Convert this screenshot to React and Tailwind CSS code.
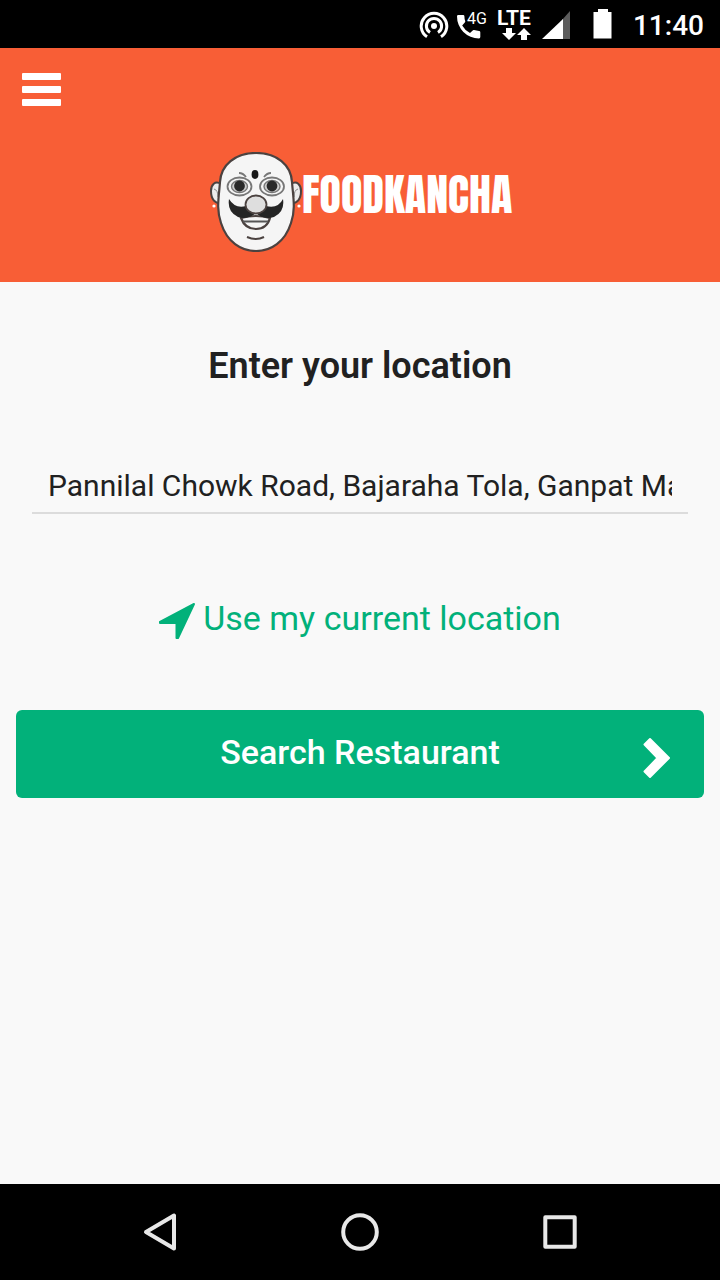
import React, { useState } from "react";

const StatusBar = () => (
  <div className="h-12 bg-black text-white flex items-center justify-end pr-4">
    {/* hotspot */}
    <svg className="w-8 h-8 mr-2" viewBox="0 0 32 32" fill="none" stroke="currentColor" strokeWidth={3}>
      <circle cx="17" cy="18" r="3" fill="currentColor" stroke="none" />
      <path d="M13 24.5 A7.6 7.6 0 1 1 21 24.5" />
      <path d="M10 28.8 A12.8 12.8 0 1 1 24 28.8" />
    </svg>
    {/* 4G call */}
    <svg className="w-8 h-8 mr-2 overflow-visible" viewBox="0 0 32 32" fill="currentColor">
      <path d="M1.3 7 h4.800 a1.3 1.3 0 0 1 1.3 1.3 q0 2.600 .8 4.800 a1.3 1.3 0 0 1 -.4 1.4 l-2.600 2.900 a19 19 0 0 0 7.800 7.600 l2.700 -2.600 a1.3 1.3 0 0 1 1.4 -.3 q2.400 .8 5 .8 a1.3 1.3 0 0 1 1.2 1.3 v4.900 a1.3 1.3 0 0 1 -1.3 1.3 A22 22 0 0 1 0 8.3 A1.3 1.3 0 0 1 1.3 7z" />
      <text x="10" y="16" fontSize="16" fontFamily="Roboto, sans-serif">4G</text>
    </svg>
    {/* LTE data */}
    <svg className="w-9 h-8 mr-2 overflow-visible" viewBox="0 0 36 32" fill="currentColor">
      <text x="0" y="17" fontSize="21" fontWeight="700" fontFamily="Roboto, sans-serif">LTE</text>
      <path d="M9 20h6v5h4l-7 7-7-7h4z" />
      <path d="M24 32h6v-5h4l-7-7-7 7h4z" />
    </svg>
    {/* signal */}
    <svg className="w-8 h-8 mr-5" viewBox="0 0 32 32">
      <path d="M21 12 L29 3 V31 H21z" fill="#5c5c5c" />
      <path d="M1 31 L22 11 V31z" fill="white" />
    </svg>
    {/* battery */}
    <svg className="w-5 h-8 mr-5" viewBox="0 0 20 32" fill="currentColor">
      <path d="M5 1h10v3h3.5v26.5h-18V4H5z" />
    </svg>
    <span className="pt-1 text-[28px] leading-8 font-medium">11:40</span>
  </div>
);

const Face = () => (
  <svg className="w-[92px] h-[100px] shrink-0" viewBox="0 0 92 100" fill="none" stroke="#4b4240">
    {/* ears */}
    <path d="M11 32 C5 28 1 33 1 39 C1 47 5 52 11 51z" fill="#ececec" strokeWidth={2} />
    <path d="M81 32 C87 28 91 33 91 39 C91 47 87 52 81 51z" fill="#ececec" strokeWidth={2} />
    <path d="M4 37 q4 1 4 8 M88 37 q-4 1 -4 8" stroke="#888" strokeWidth={1} />
    <circle cx="4" cy="54" r="1.6" fill="white" stroke="none" />
    <circle cx="89" cy="54" r="1.6" fill="white" stroke="none" />
    {/* head */}
    <path
      d="M46 1 C67 1 81 13 82 30 C83 44 86 57 81 71 C75 90 61 99 46 99 C31 99 17 90 11 71 C6 57 9 44 10 30 C11 13 25 1 46 1z"
      fill="#f5f5f5"
      strokeWidth={2.2}
    />
    {/* tilak and brows */}
    <ellipse cx="45" cy="22.5" rx="3.4" ry="4.4" fill="#181818" stroke="none" />
    <path d="M29 21 q4 0 7 4 M54 25 q3 -4 7 -4" stroke="#777" strokeWidth={1.8} />
    {/* eyes */}
    <ellipse cx="29.5" cy="34.5" rx="12" ry="9" stroke="#777" strokeWidth={1.8} />
    <ellipse cx="29.5" cy="34.5" rx="8" ry="6" fill="#ccc" stroke="#777" strokeWidth={1.4} />
    <circle cx="29.5" cy="34" r="5.4" fill="#292929" stroke="none" />
    <ellipse cx="62" cy="34.5" rx="12" ry="9" stroke="#777" strokeWidth={1.8} />
    <ellipse cx="62" cy="34.5" rx="8" ry="6" fill="#ccc" stroke="#777" strokeWidth={1.4} />
    <circle cx="62" cy="34" r="5.4" fill="#292929" stroke="none" />
    {/* mouth */}
    <path d="M31 66 Q35 77 46 77 Q57 77 60 66 Q46 62 31 66z" fill="#f5f5f5" strokeWidth={2.2} />
    <path d="M33 69.500 H58" stroke="#555" strokeWidth={2} />
    <path d="M37 85 Q46 89 54 85" strokeWidth={2} />
    {/* moustache */}
    <path
      d="M19 47 Q25 57 36 54 Q46 56 56 54 Q68 57 73 47 Q75 60 64 65 Q53 68 46 61 Q38 68 28 65 Q17 60 19 47z"
      fill="#252525"
      stroke="none"
    />
    <ellipse cx="46" cy="52.5" rx="10.5" ry="9" fill="#dedede" strokeWidth={1.8} />
  </svg>
);

const Header = () => (
  <header className="bg-[#f85e36] pt-5 pb-[30px]">
    <button type="button" aria-label="Open menu" className="block ml-[22px] py-[6px]">
      <svg className="w-10 h-8 overflow-visible" viewBox="0 0 40 32" fill="white">
        <rect x="0" y="-1" width="39" height="7" rx="1" />
        <rect x="0" y="12" width="39" height="7" rx="1" />
        <rect x="0" y="25" width="39" height="7" rx="1" />
      </svg>
    </button>
    <div className="mt-10 flex justify-center items-center">
      <Face />
      <span className="w-[208px] pb-4 text-white text-[44px] leading-10 font-normal whitespace-nowrap font-[Anton,Impact,sans-serif]">
        FOODKANCHA
      </span>
    </div>
  </header>
);

const NavBar = () => (
  <nav className="h-24 px-15 bg-black text-[#e8e8e8] grid grid-cols-3 items-center justify-items-center">
    <button type="button" aria-label="Back">
      <svg className="w-10 h-10" viewBox="0 0 40 40" fill="none" stroke="currentColor" strokeWidth={4} strokeLinejoin="round">
        <path d="M34 3.5 V36.5 L6 20z" />
      </svg>
    </button>
    <button type="button" aria-label="Home">
      <svg className="w-10 h-10" viewBox="0 0 40 40" fill="none" stroke="currentColor" strokeWidth={4}>
        <circle cx="20" cy="20" r="16.8" />
      </svg>
    </button>
    <button type="button" aria-label="Recent apps">
      <svg className="w-10 h-10" viewBox="0 0 40 40" fill="none" stroke="currentColor" strokeWidth={4} strokeLinejoin="round">
        <rect x="5.3" y="5.3" width="29.4" height="29.4" />
      </svg>
    </button>
  </nav>
);

const App = () => {
  const [location, setLocation] = useState(
    "Pannilal Chowk Road, Bajaraha Tola, Ganpat Market"
  );

  return (
    <div className="min-h-screen flex flex-col bg-[#f9f9f9] font-[Roboto,sans-serif]">
      <StatusBar />
      <Header />

      <main className="flex-1 px-4 pt-16 text-[#212121]">
        <h1 className="text-center text-[36px] leading-10 font-semibold">
          <label htmlFor="location">Enter your location</label>
        </h1>

        <div className="mx-4 mt-[72px] px-4 border-b-2 border-[#dcdcdc]">
          <input
            id="location"
            type="text"
            value={location}
            onChange={(e) => setLocation(e.target.value)}
            className="block w-full h-[54px] text-[30px] bg-transparent outline-none"
          />
        </div>

        <div className="mt-[84px] flex justify-center">
          <a href="#current" className="flex items-center gap-2 text-[34px] leading-10 text-[#02b17a]">
            <svg className="w-9 h-10 overflow-visible" viewBox="0 0 36 40" fill="currentColor" stroke="currentColor" strokeWidth={2} strokeLinejoin="round">
              <path d="M35 6 L19 40 H17.500 V25 H1 V24z" />
            </svg>
            Use my current location
          </a>
        </div>

        <button
          type="button"
          className="mt-[72px] w-full h-22 pl-16 pr-8 rounded-md bg-[#02b17a] text-white flex items-center"
        >
          <span className="flex-1 pb-1 text-center text-[34px] leading-10 font-medium">
            Search Restaurant
          </span>
          <svg className="w-8 h-12 mt-2" viewBox="0 0 32 48" fill="currentColor" stroke="currentColor" strokeWidth={2} strokeLinejoin="round">
            <path d="M10 5 L29 24 L10 43 L4.500 37.500 L17.500 24 L4.500 10.500z" />
          </svg>
        </button>
      </main>

      <NavBar />
    </div>
  );
};

export default App;
